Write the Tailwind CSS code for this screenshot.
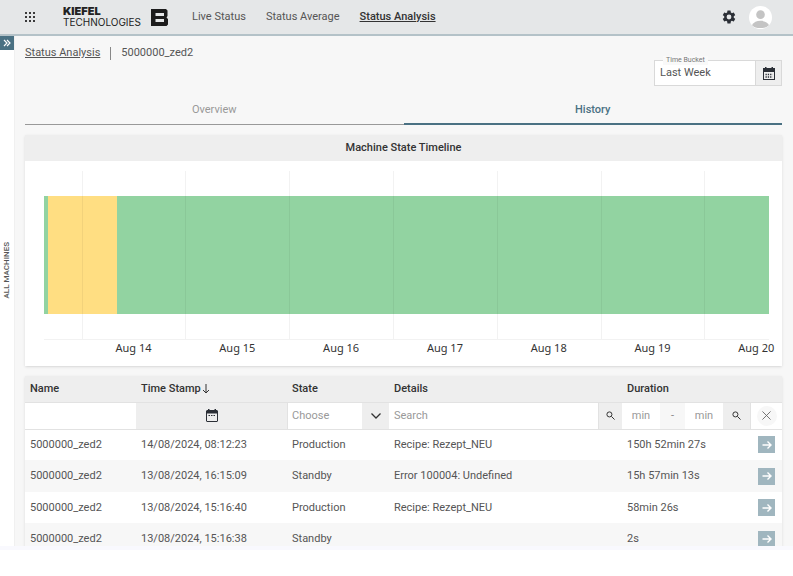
<!DOCTYPE html>
<html lang="en">
  <head>
    <meta charset="UTF-8" />
    <meta name="viewport" content="width=device-width, initial-scale=1.0" />
    <title>Status Analysis</title>
    <script src="https://cdn.jsdelivr.net/npm/@tailwindcss/browser@4"></script>
  </head>
  <body
    class="h-screen flex flex-col overflow-hidden bg-white font-['Roboto',sans-serif] text-[11px] leading-4 text-[#555555]"
  >
    <header
      class="flex items-center h-9 shrink-0 pl-6 pr-[21px] bg-[#e5e7e8] border-b-2 border-[#b4c2c8]"
    >
      <button aria-label="Apps" class="w-3 mr-[27px] text-[#3a3a3a]">
        <svg viewBox="0 0 12 12" class="w-3 h-3" fill="currentColor">
          <rect x="1" y="1" width="2" height="2" /><rect x="5" y="1" width="2" height="2" /><rect x="9" y="1" width="2" height="2" />
          <rect x="1" y="5" width="2" height="2" /><rect x="5" y="5" width="2" height="2" /><rect x="9" y="5" width="2" height="2" />
          <rect x="1" y="9" width="2" height="2" /><rect x="5" y="9" width="2" height="2" /><rect x="9" y="9" width="2" height="2" />
        </svg>
      </button>
      <a href="#" class="flex items-center text-[#222222] mr-6">
        <span class="w-[88px] font-['Inter',sans-serif] leading-[11px]">
          <span class="block text-[11px] font-black">KIEFEL</span>
          <span class="block text-[10px]">TECHNOLOGIES</span>
        </span>
        <svg viewBox="0 0 17 17" class="w-[17px] h-[17px]" fill-rule="evenodd">
          <path fill="#1c1c1c" d="M0 0H15L16.500 1.500V7L15.500 8.500L17 10V15.500L15.500 17H0ZM4.500 4V7H13V4ZM4.500 10V13H13V10Z" />
        </svg>
      </a>
      <nav class="flex gap-5 flex-1">
        <a href="#">Live Status</a>
        <a href="#">Status Average</a>
        <a href="#" class="font-medium underline text-[#333333]">Status Analysis</a>
      </nav>
      <button aria-label="Settings" class="mr-3">
        <svg viewBox="0 0 24 24" class="w-4 h-4" fill="#2b2f36">
          <path d="M19.140 12.940c.04-.3.06-.61.06-.94s-.02-.64-.07-.94l2.030-1.580a.49.49 0 0 0 .12-.61l-1.920-3.320a.49.49 0 0 0-.59-.22l-2.390.96a7 7 0 0 0-1.620-.94l-.36-2.540a.48.48 0 0 0-.48-.41h-3.840a.48.48 0 0 0-.47.41l-.36 2.540a7 7 0 0 0-1.620.94l-2.390-.96a.48.48 0 0 0-.59.22L2.740 8.870a.48.48 0 0 0 .12.610l2.030 1.580c-.05.3-.09.63-.09.94s.02.64.07.94l-2.030 1.580a.49.49 0 0 0-.12.610l1.920 3.320c.12.22.37.29.59.22l2.390-.96c.5.38 1.030.7 1.620.94l.36 2.540c.05.24.24.41.48.41h3.840c.24 0 .44-.17.47-.41l.36-2.540a7 7 0 0 0 1.620-.94l2.390.96c.22.08.47 0 .59-.22l1.920-3.320a.48.48 0 0 0-.12-.61zM12 15.600a3.600 3.600 0 1 1 0-7.200 3.600 3.600 0 0 1 0 7.200z" />
        </svg>
      </button>
      <button aria-label="Account">
        <svg viewBox="0 0 24 24" class="w-[23px] h-[23px] rounded-full bg-white" fill="#c4c4c4">
          <circle cx="12" cy="9" r="4.500" />
          <path d="M3 20c2-3 5-4.500 9-4.500s7 1.500 9 4.500c-2 2-5 3-9 3s-7-1-9-3z" />
        </svg>
      </button>
    </header>

    <div class="flex flex-1 min-h-0">
      <aside class="flex flex-col items-center w-[14px] shrink-0 bg-white">
        <button aria-label="Expand" class="grid place-items-center w-full h-[14px] bg-[#4a7183]">
          <svg viewBox="0 0 8 8" class="w-2 h-2" fill="none" stroke="#ffffff" stroke-width="1.200">
            <path d="M1 1l3 3-3 3M4 1l3 3-3 3" />
          </svg>
        </button>
        <span class="pb-48 rotate-180 [writing-mode:vertical-rl] text-[8px] leading-3 font-medium whitespace-nowrap">ALL MACHINES</span>
      </aside>

      <main class="flex-1 min-w-0 overflow-hidden pl-[10px] pr-[11px] bg-[#f7f7f7] border-l border-[#f0f0f0]">
        <div class="flex justify-between">
          <div class="flex items-center h-4 mt-[9px]">
            <a href="#" class="underline">Status Analysis</a>
            <span class="w-px h-[13px] mx-[10px] bg-[#888888]"></span>
            <span>5000000_zed2</span>
          </div>
          <div class="relative flex w-32 h-[26px] mt-6 border border-[#d9d9d9] bg-white">
            <label for="bucket" class="absolute left-2 -top-[5px] px-[3px] bg-[#f9f9f9] text-[7px] leading-[9px] text-[#777777]">Time Bucket</label>
            <input id="bucket" type="text" value="Last Week" class="flex-1 min-w-0 pl-[5px] outline-none" />
            <button aria-label="Pick dates" class="grid place-items-center w-[26px] bg-[#eeeeee] border-l border-[#d9d9d9]">
              <svg viewBox="0 0 12 13" class="w-3 h-[13px]">
                <path fill="#2b2f36" fill-rule="evenodd" d="M0 1H2V0H3.500V1H8.500V0H10V1H12V13H0ZM1 5V12H11V5Z" />
                <path stroke="#2b2f36" stroke-width="1.300" stroke-dasharray="1.300 1" d="M2.500 7.500H9.500M2.500 10H9.500" />
              </svg>
            </button>
          </div>
        </div>

        <div class="grid grid-cols-2 mt-3 mb-[10px]">
          <button class="h-[27px] pb-[2px] text-[#999999] border-b border-[#999999]">Overview</button>
          <button class="h-[27px] pb-[2px] font-medium text-[#4a7183] border-b-2 border-[#4a7183]">History</button>
        </div>

        <section class="bg-white overflow-hidden shadow">
          <h2 class="h-[26px] leading-[26px] text-center font-medium text-[#333333] bg-[#eeeeee]">Machine State Timeline</h2>
          <div class="pl-[19px] pr-[13px] pt-[10px] pb-[18px]">
            <div class="relative h-[169px] pt-[25px] border-b border-black/5">
              <div class="flex h-[118px]">
                <div class="w-[0.6%] bg-[#92d3a1]"></div>
                <div class="w-[9.5%] bg-[#ffde82]"></div>
                <div class="flex-1 bg-[#92d3a1]"></div>
              </div>
              <div class="absolute inset-0 flex overflow-hidden pl-[5.2%]">
                <div class="w-[15.1%] shrink-0 border-l border-black/5"></div>
                <div class="w-[15.1%] shrink-0 border-l border-black/5"></div>
                <div class="w-[15.1%] shrink-0 border-l border-black/5"></div>
                <div class="w-[15.1%] shrink-0 border-l border-black/5"></div>
                <div class="w-[15.1%] shrink-0 border-l border-black/5"></div>
                <div class="w-[15.1%] shrink-0 border-l border-black/5"></div>
                <div class="w-[15.1%] shrink-0 border-l border-black/5"></div>
              </div>
            </div>
            <div class="flex h-2 pl-[5.2%] text-center font-['Noto_Sans',sans-serif] text-[#333333]">
              <span class="w-[15.1%] shrink-0">Aug 14</span>
              <span class="w-[15.1%] shrink-0">Aug 15</span>
              <span class="w-[15.1%] shrink-0">Aug 16</span>
              <span class="w-[15.1%] shrink-0">Aug 17</span>
              <span class="w-[15.1%] shrink-0">Aug 18</span>
              <span class="w-[15.1%] shrink-0">Aug 19</span>
              <span class="w-[15.1%] shrink-0">Aug 20</span>
            </div>
          </div>
        </section>

        <section class="mt-[10px] bg-white shadow">
          <table class="w-full table-fixed text-left">
            <colgroup>
              <col class="w-[111px]" />
              <col class="w-[151px]" />
              <col class="w-[102px]" />
              <col />
              <col class="w-[129px]" />
              <col class="w-[31px]" />
            </colgroup>
            <thead>
              <tr class="h-[26px] bg-[#eeeeee] text-[#333333]">
                <th class="pl-[5px] font-medium">Name</th>
                <th class="pl-[5px] font-medium">
                  <span class="flex items-center">Time Stamp
                    <svg viewBox="0 0 8 10" class="w-2 h-[10px] ml-px" fill="none" stroke="currentColor">
                      <path d="M4 0v9M1 6l3 3 3-3" />
                    </svg>
                  </span>
                </th>
                <th class="pl-[5px] font-medium">State</th>
                <th class="pl-[5px] font-medium">Details</th>
                <th class="pl-[5px] font-medium">Duration</th>
                <th></th>
              </tr>
              <tr class="h-[27px] border-y border-[#e2e2e2]">
                <td><input aria-label="Filter name" type="text" class="block w-full h-[26px] px-[5px] outline-none" /></td>
                <td class="bg-[#eeeeee]">
                  <button aria-label="Filter time stamp" class="grid place-items-center w-full h-[26px]">
                    <svg viewBox="0 0 12 13" class="w-3 h-[13px]">
                      <path fill="#2b2f36" fill-rule="evenodd" d="M1 1H2V0H3.500V1H8.500V0H10V1H11L12 2V12L11 13H1L0 12V2ZM1 4.500V12H11V4.500Z" />
                      <path stroke="#2b2f36" stroke-dasharray="1.500 1" d="M2.500 6.500H9.500" />
                    </svg>
                  </button>
                </td>
                <td>
                  <div class="relative flex">
                    <select aria-label="Filter state" class="appearance-none w-full h-[26px] pl-1 text-[#999999] outline-none border-l border-[#e2e2e2]">
                      <option>Choose</option>
                      <option>Production</option>
                      <option>Standby</option>
                    </select>
                    <span class="absolute right-0 inset-y-0 grid place-items-center w-[27px] bg-[#eeeeee] pointer-events-none">
                      <svg viewBox="0 0 10 6" class="w-[10px] h-[6px]" fill="none" stroke="#333333" stroke-width="1.300">
                        <path d="M.5.5L5 5 9.500.5" />
                      </svg>
                    </span>
                  </div>
                </td>
                <td>
                  <div class="flex h-[26px]">
                    <input aria-label="Search details" type="text" placeholder="Search" class="flex-1 min-w-0 pl-[5px] placeholder:text-[#999999] outline-none" />
                    <button aria-label="Search" class="grid place-items-center w-6 bg-[#eeeeee] border-l border-[#e2e2e2]">
                      <svg viewBox="0 0 10 10" class="w-[9px] h-[9px]" fill="none" stroke="#333333" stroke-width="1.100">
                        <circle cx="3.800" cy="3.800" r="2.800" /><path d="M6 6l3.500 3.500" />
                      </svg>
                    </button>
                  </div>
                </td>
                <td>
                  <div class="flex h-[26px]">
                    <input aria-label="Minimum duration" type="text" placeholder="min" class="w-[38px] text-center placeholder:text-[#999999] outline-none" />
                    <span class="flex-1 leading-[26px] text-center bg-[#f7f7f7] text-[#888888]">-</span>
                    <input aria-label="Maximum duration" type="text" placeholder="min" class="w-[38px] text-center placeholder:text-[#999999] outline-none" />
                    <button aria-label="Search duration" class="grid place-items-center w-7 bg-[#eeeeee] border-r border-[#e2e2e2]">
                      <svg viewBox="0 0 10 10" class="w-[9px] h-[9px]" fill="none" stroke="#333333" stroke-width="1.100">
                        <circle cx="3.800" cy="3.800" r="2.800" /><path d="M6 6l3.500 3.500" />
                      </svg>
                    </button>
                  </div>
                </td>
                <td>
                  <button aria-label="Clear filters" class="grid place-items-center w-5 h-5 mx-auto rounded-full bg-[#f7f7f7]">
                    <svg viewBox="0 0 10 10" class="w-[9px] h-[9px]" fill="none" stroke="#666666">
                      <path d="M.5.5l9 9M9.500.5l-9 9" />
                    </svg>
                  </button>
                </td>
              </tr>
            </thead>
            <tbody id="rows"></tbody>
          </table>
        </section>
      </main>
    </div>
    <footer class="h-[30px] shrink-0 bg-white border-t-4 border-[#f9f9fe]"></footer>

    <script>
      const entries = [
        ["14/08/2024, 08:12:23", "Production", "Recipe: Rezept_NEU", "150h 52min 27s"],
        ["13/08/2024, 16:15:09", "Standby", "Error 100004: Undefined", "15h 57min 13s"],
        ["13/08/2024, 15:16:40", "Production", "Recipe: Rezept_NEU", "58min 26s"],
        ["13/08/2024, 15:16:38", "Standby", "", "2s"],
      ];

      document.getElementById("rows").innerHTML = entries
        .map(
          ([time, state, details, duration]) => `
            <tr class="h-[31px] even:h-8 even:bg-[#f7f7f7]">
              <td class="pl-[5px]">5000000_zed2</td>
              <td class="pl-[5px]">${time}</td>
              <td class="pl-[5px]">${state}</td>
              <td class="pl-[5px]">${details}</td>
              <td class="pl-[5px]">${duration}</td>
              <td>
                <button aria-label="Open" class="grid place-items-center w-[17px] h-[17px] mx-auto bg-[#a0b6bf]">
                  <svg viewBox="0 0 10 10" class="w-[10px] h-[10px]" fill="none" stroke="#ffffff" stroke-width="1.400">
                    <path d="M.5 5h8.500M5.500 1.500L9 5 5.500 8.500" />
                  </svg>
                </button>
              </td>
            </tr>`
        )
        .join("");
    </script>
  </body>
</html>
